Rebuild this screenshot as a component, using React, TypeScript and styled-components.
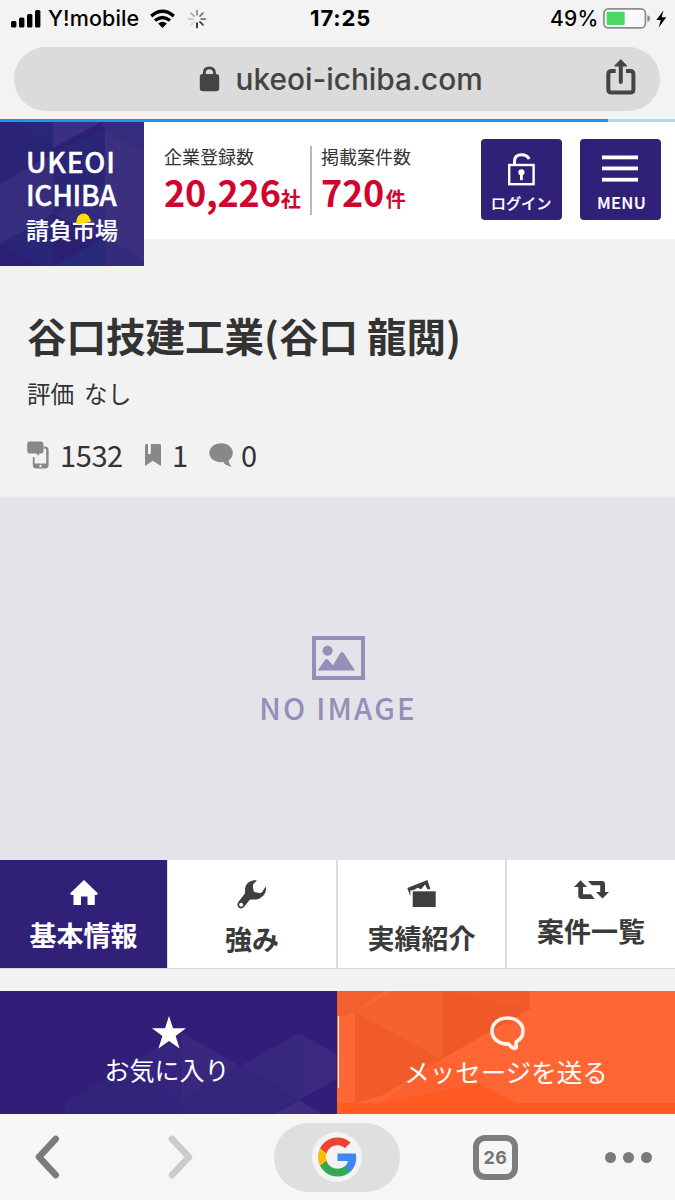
import React from "react";
import styled, { createGlobalStyle } from "styled-components";

const jp = '"Noto Sans CJK JP", "Noto Sans", sans-serif';
const ui = 'Inter, "Liberation Sans", sans-serif';
const navy = "#312078";

const GlobalStyle = createGlobalStyle`
  *, *::before, *::after { box-sizing: border-box; }
  html, body { margin: 0; padding: 0; background: #f2f2f2; }
  svg { display: block; flex: none; overflow: visible; }
`;

const Screen = styled.div`
  width: 675px;
  height: 1200px;
  overflow: hidden;
  display: flex;
  flex-direction: column;
  background: #f2f2f2;
  color: #333;
  font-family: ${jp};
  white-space: nowrap;
`;

/* Browser chrome */
const Chrome = styled.div`
  height: 119px;
  flex: none;
  background: #f3f3f4;
  font-family: ${ui};
`;

const StatusBar = styled.div`
  height: 37px;
  display: flex;
  align-items: center;
  color: #000;
  font-size: 21px;
  line-height: 37px;
`;

const Carrier = styled.div`
  width: 310px;
  padding-left: 11px;
  display: flex;
  align-items: center;
`;

const CarrierName = styled.span`
  width: 109px;
  padding-left: 7px;
  font-weight: 500;
  font-size: 21.5px;
  letter-spacing: 0.1px;
`;

const Spinner = styled.svg`
  margin-left: 13px;
`;

const Clock = styled.div`
  width: 240px;
  font-weight: 700;
  font-size: 22px;
  letter-spacing: 0.9px;
`;

const Battery = styled.div`
  display: flex;
  align-items: center;
  font-weight: 500;
  gap: 5px;
`;

const BatteryLevel = styled.span`
  width: 48px;
  letter-spacing: 0.2px;
`;

const AddressBar = styled.div`
  margin: 10px 15px 0 14px;
  height: 64px;
  border-radius: 32px;
  background: #dbdbdc;
  display: flex;
  align-items: center;
  padding-left: 185px;
  color: #444;
`;

const Url = styled.span`
  width: 370px;
  margin-left: 15.5px;
  font-size: 29.8px;
  font-weight: 500;
  line-height: 64px;
`;

const ShareIcon = styled.svg`
  margin-bottom: 3px;
`;

const Progress = styled.div`
  height: 3px;
  flex: none;
  background: #b4d6f0;
`;

const ProgressFill = styled.div`
  width: 608px;
  height: 3px;
  background: #2393f1;
`;

/* Site header */
const Header = styled.header`
  height: 117px;
  flex: none;
  background: #fff;
  display: flex;
  align-items: flex-start;
`;

const Logo = styled.div`
  position: relative;
  width: 144px;
  height: 144px;
  flex: none;
  background: #2c2074;
  color: #fff;
  padding: 23px 0 0 26px;
`;

const Pattern = styled.svg`
  position: absolute;
  left: 0;
  top: 0;
`;

const LogoWord = styled.div<{ $spacing: number }>`
  position: relative;
  height: 33px;
  line-height: 33px;
  font-size: 28px;
  font-weight: 500;
  -webkit-text-stroke: 0.4px #fff;
  letter-spacing: ${(p) => p.$spacing}px;
`;

const LogoKanji = styled.div`
  position: relative;
  height: 36px;
  line-height: 36px;
  font-size: 23px;
  font-weight: 500;
  -webkit-text-stroke: 0.2px #fff;
`;

const Helmet = styled.svg`
  position: absolute;
  left: 49.5px;
  top: 2px;
`;

const Counter = styled.div<{ $width: number; $divided?: boolean }>`
  width: ${(p) => p.$width}px;
  height: 69px;
  margin: 24px 0 0 ${(p) => (p.$divided ? 20 : 9)}px;
  border-right: ${(p) => (p.$divided ? "2px solid #b9b9b9" : "none")};
`;

const CounterLabel = styled.div`
  height: 20px;
  line-height: 20px;
  font-size: 18px;
`;

const CounterValue = styled.div`
  height: 50px;
  line-height: 51px;
  font-size: 36px;
  font-weight: 700;
  letter-spacing: -0.2px;
  color: #d0042c;
`;

const Unit = styled.span<{ $gap?: number }>`
  margin-left: ${(p) => p.$gap || 0}px;
  font-size: 20px;
`;

const HeaderButton = styled.button<{ $left: number }>`
  width: 81px;
  height: 81px;
  margin: 16.7px 0 0 ${(p) => p.$left}px;
  padding: 14px 0 0;
  border: 0;
  border-radius: 4px;
  background: ${navy};
  color: #fff;
  font-family: ${jp};
  font-weight: 500;
  display: flex;
  flex-direction: column;
  align-items: center;
`;

const ButtonIcon = styled.div`
  height: 34px;
`;

const ButtonText = styled.span<{ $size: number; $shift?: number }>`
  font-size: ${(p) => p.$size}px;
  line-height: 31px;
  letter-spacing: ${(p) => (p.$shift ? 0.3 : 0)}px;
  padding-left: ${(p) => p.$shift || 0}px;
  -webkit-text-stroke: 0.2px #fff;
`;

/* Company summary */
const Summary = styled.section`
  height: 258px;
  flex: none;
  padding: 71px 0 0 27px;
`;

const Title = styled.h1`
  margin: 0 0 2px;
  height: 50px;
  line-height: 50px;
  font-size: 39.5px;
  font-weight: 700;
`;

const Rating = styled.div`
  height: 62px;
  line-height: 62px;
  font-size: 23.6px;
  word-spacing: 4.6px;
`;

const Metrics = styled.div`
  display: flex;
  align-items: center;
  height: 62px;
  font-size: 29px;
  line-height: 62px;
`;

const Metric = styled.div<{ $width: number; $gap: number }>`
  display: flex;
  align-items: center;
  width: ${(p) => p.$width}px;
  gap: ${(p) => p.$gap}px;
`;

const MetricValue = styled.span`
  margin-top: -3px;
  letter-spacing: -0.4px;
`;

const NoImage = styled.section`
  height: 363px;
  flex: none;
  background: #e4e3ea;
  color: #958eb9;
  display: flex;
  flex-direction: column;
  align-items: center;
  padding: 139px 0 0 2px;
`;

const NoImageText = styled.div`
  margin: 9px 0 0 -1px;
  height: 36px;
  line-height: 36px;
  font-size: 29.4px;
  font-weight: 500;
  letter-spacing: 2.2px;
`;

/* Tabs */
const Tabs = styled.nav`
  height: 109px;
  flex: none;
  display: grid;
  grid-template-columns: 168px 170px 169px 168px;
  border-bottom: 1px solid #d6d6d6;
`;

const Tab = styled.div<{ $active?: boolean }>`
  display: flex;
  flex-direction: column;
  align-items: center;
  padding-top: 20px;
  background: ${(p) => (p.$active ? navy : "#fff")};
  color: ${(p) => (p.$active ? "#fff" : "#3a3a3a")};
  border-right: ${(p) => (p.$active ? "1px" : "2px")} solid #dcdcdf;
  &:last-child { border-right: 0; }
`;

const TabLabel = styled.span`
  margin-top: 10px;
  font-size: 27px;
  line-height: 40px;
  font-weight: 700;
`;

/* Fixed actions */
const Actions = styled.div`
  margin-top: 22px;
  height: 123px;
  flex: none;
  display: flex;
`;

const Action = styled.div<{ $accent?: boolean }>`
  position: relative;
  width: ${(p) => (p.$accent ? 338 : 337)}px;
  padding-top: 25px;
  padding-left: ${(p) => (p.$accent ? 3 : 0)}px;
  background: ${(p) => (p.$accent ? "#ff5a22" : "#321d78")};
  color: #fff;
  display: flex;
  flex-direction: column;
  align-items: center;
  overflow: hidden;
  &::before {
    content: "";
    display: ${(p) => (p.$accent ? "block" : "none")};
    position: absolute;
    left: 1px;
    top: 25px;
    width: 1px;
    height: 72px;
    background: #fff;
    z-index: 1;
  }
`;

const ActionIcon = styled.div`
  position: relative;
`;

const ActionLabel = styled.span<{ $size: number }>`
  position: relative;
  margin: 1.5px 3px 0 0;
  font-size: ${(p) => p.$size}px;
  line-height: 36px;
`;

/* Browser toolbar */
const Toolbar = styled.div`
  height: 86px;
  flex: none;
  display: flex;
  align-items: center;
  padding-left: 35px;
  background: #f6f6f7;
`;

const Forward = styled.div`
  margin-left: 109px;
`;

const GooglePill = styled.div`
  width: 126px;
  height: 69px;
  margin-left: 81px;
  border-radius: 35px;
  background: #dfdfdf;
  display: flex;
  align-items: center;
  justify-content: center;
`;

const GoogleDisc = styled.div`
  width: 50px;
  height: 50px;
  border-radius: 50%;
  background: #f3f3f4;
  display: flex;
  align-items: center;
  justify-content: center;
`;

const TabCount = styled.div`
  width: 45px;
  height: 45px;
  margin-left: 73px;
  border: 6px solid #7d7d7d;
  border-radius: 12px;
  color: #757575;
  font: 700 18px/33px ${ui};
  letter-spacing: 0.6px;
  text-align: center;
`;

const More = styled.div`
  display: flex;
  gap: 7px;
  margin-left: 87px;
`;

const Dot = styled.i`
  width: 11px;
  height: 11px;
  border-radius: 50%;
  background: #7a7a7a;
`;

const spokes = [0, 45, 90, 135, 180, 225, 270, 315];
const spokeAlpha = [0.5, 0.6, 0.72, 0.85, 1, 0.15, 0.22, 0.35];

export default function App() {
  return (
    <Screen>
      <GlobalStyle />
      <Chrome>
        <StatusBar>
          <Carrier>
            <svg width="30" height="18" viewBox="0 0 30 18">
              <rect x="0" y="11" width="5.4" height="6.5" rx="1.5" />
              <rect x="8" y="7.5" width="5.4" height="10" rx="1.5" />
              <rect x="16" y="4" width="5.4" height="13.5" rx="1.5" />
              <rect x="24" y="0" width="5.4" height="17.5" rx="1.5" />
            </svg>
            <CarrierName>Y!mobile</CarrierName>
            <svg width="25" height="18" viewBox="0 0 25 18">
              <g fill="none" stroke="#000" strokeWidth="3.4">
                <path d="M1.2 6.1Q12.5-3.4 23.8 6.1" />
                <path d="M5 10.5Q12.5 4.3 20 10.5" />
              </g>
              <path d="M8.1 13.4Q12.5 10 16.9 13.4L12.5 18Z" />
            </svg>
            <Spinner width="18" height="18" viewBox="-9 -9 18 18">
              {spokes.map((a, i) => (
                <line key={a} x1="0" y1="-4.2" x2="0" y2="-8.4" stroke="#222" strokeWidth="1.7" strokeLinecap="round" opacity={spokeAlpha[i]} transform={`rotate(${a})`} />
              ))}
            </Spinner>
          </Carrier>
          <Clock>17:25</Clock>
          <Battery>
            <BatteryLevel>49%</BatteryLevel>
            <svg width="48" height="21" viewBox="0 0 48 21">
              <rect x="0.9" y="0.9" width="41.5" height="19" rx="4.5" fill="#fafafa" stroke="#8d8d8f" strokeWidth="1.7" />
              <rect x="3.7" y="3.8" width="18" height="13.2" rx="1" fill="#4bd964" />
              <path d="M44.4 7Q47.2 8 47.2 10.4T44.4 13.8Z" fill="#8d8d8f" />
            </svg>
            <svg width="11" height="18" viewBox="0 0 11 18">
              <path d="M7.4 0.5L0.3 10H4.7L2.7 17.4L10.3 7.3H5.7Z" />
            </svg>
          </Battery>
        </StatusBar>
        <AddressBar>
          <svg width="21" height="26" viewBox="0 0 21 26">
            <path d="M5.3 11V7Q5.3 1.8 10.4 1.8T15.5 7V11" fill="none" stroke="#444" strokeWidth="2.8" />
            <rect x="0.8" y="8" width="19.4" height="17.3" rx="3" fill="#444" />
          </svg>
          <Url>ukeoi-ichiba.com</Url>
          <ShareIcon width="30" height="37" viewBox="0 0 30 37" fill="none" stroke="#444" strokeWidth="4">
            <path d="M9.7 12H5.5Q2.3 12 2.3 15.2V30.3Q2.3 33.6 5.5 33.6H24.2Q27.4 33.6 27.4 30.3V15.2Q27.4 12 24.2 12H20" />
            <path d="M14.8 23V4" strokeLinecap="round" />
            <path d="M14.8 0.6L21 7H8.6Z" fill="#444" strokeWidth="1" strokeLinejoin="round" />
          </ShareIcon>
        </AddressBar>
      </Chrome>
      <Progress>
        <ProgressFill />
      </Progress>

      <Header>
        <Logo>
          <Pattern width="144" height="144" viewBox="0 0 144 144">
            <path d="M0 0H53V32L0 62Z" fill="#2b2375" />
            <path d="M12 0H53V22Z" fill="#292877" />
            <path d="M53 0H101L53 26Z" fill="#3a2f80" />
            <path d="M101 0H144V30L105 8Z" fill="#362c7d" />
            <path d="M105 8L144 30V144H105Z" fill="#3b3080" />
            <path d="M53 30L105 6V62L53 92Z" fill="#2a2677" />
            <path d="M0 62L53 32V92L0 122Z" fill="#372d7e" />
            <path d="M53 92L105 62V118Z" fill="#332a7b" />
            <path d="M0 122L53 92V144H40Z" fill="#2a2677" />
            <path d="M53 144L105 116V144Z" fill="#282979" />
            <path d="M105 116L144 138V144H105Z" fill="#352b7d" />
          </Pattern>
          <LogoWord $spacing={0.8}>UKEOI</LogoWord>
          <LogoWord $spacing={-0.3}>ICHIBA</LogoWord>
          <LogoKanji>
            請負市場
            <Helmet width="16" height="12" viewBox="0 0 16 12">
              <path d="M0.4 11.5Q-0.4 4 4.5 1.3Q9-1 12.2 2.6Q13.6 4.2 14 6.3L15.6 7.4L14 9Z" fill="#ffdd00" />
            </Helmet>
          </LogoKanji>
        </Logo>
        <Counter $width={148} $divided>
          <CounterLabel>企業登録数</CounterLabel>
          <CounterValue>20,226<Unit>社</Unit></CounterValue>
        </Counter>
        <Counter $width={100}>
          <CounterLabel>掲載案件数</CounterLabel>
          <CounterValue>720<Unit $gap={1.5}>件</Unit></CounterValue>
        </Counter>
        <HeaderButton $left={59.6}>
          <ButtonIcon>
            <svg width="27" height="33" viewBox="0 0 27 33">
              <path d="M6.5 12V8.5Q6.5 1.8 13.5 1.8Q19 1.8 21.2 6" fill="none" stroke="#fff" strokeWidth="3" />
              <rect x="1.2" y="12" width="24.4" height="19.2" fill="none" stroke="#fff" strokeWidth="2.4" />
              <circle cx="13.4" cy="19.3" r="3.1" fill="#fff" />
              <path d="M12 20H14.8V27.2H12Z" fill="#fff" />
            </svg>
          </ButtonIcon>
          <ButtonText $size={15.2}>ログイン</ButtonText>
        </HeaderButton>
        <HeaderButton $left={18}>
          <ButtonIcon>
            <svg width="36" height="33" viewBox="0 0 36 33" fill="#fff">
              <rect x="0" y="2.5" width="36" height="3.8" />
              <rect x="0" y="13.5" width="36" height="3.8" />
              <rect x="0" y="24.8" width="36" height="3.8" />
            </svg>
          </ButtonIcon>
          <ButtonText $size={16.5} $shift={3}>MENU</ButtonText>
        </HeaderButton>
      </Header>

      <Summary>
        <Title>谷口技建工業(谷口 龍閲)</Title>
        <Rating>評価 なし</Rating>
        <Metrics>
          <Metric $width={117} $gap={11}>
            <svg width="22" height="28" viewBox="0 0 22 28">
              <path d="M16.8 5.5H18Q21.6 5.5 21.6 9V24Q21.6 27.5 18 27.5H9.4Q5.8 27.5 5.8 24V16H7.6V22.6H19.2V9Q19.2 7.7 18 7.7H16.8Z" fill="#888" />
              <circle cx="13.5" cy="25" r="1.2" fill="#f2f2f2" />
              <path d="M3 0.5H13.7Q16.5 0.5 16.5 3.3V9.7Q16.5 12.5 13.7 12.5H12.2L12 14.8L9 12.5H3Q0.2 12.5 0.2 9.7V3.3Q0.2 0.5 3 0.5Z" fill="#888" />
            </svg>
            <MetricValue>1532</MetricValue>
          </Metric>
          <Metric $width={65} $gap={11}>
            <svg width="17" height="22" viewBox="0 0 17 22">
              <path d="M2.5 0H4V10H6.8V0H15.5Q17 0 17 1.5V22L8.8 16.8L1 22V1.5Q1 0 2.5 0Z" fill="#888" />
            </svg>
            <MetricValue>1</MetricValue>
          </Metric>
          <Metric $width={60} $gap={8}>
            <svg width="24" height="24" viewBox="0 0 24 24">
              <path d="M12 0.3C18.7 0.3 23.8 4.5 23.8 9.8C23.8 13.4 21.7 16.3 19.6 17.6C19.8 20 20.8 22 22.7 23.8C18.5 23.2 15.8 21.5 14.2 19.1C6.2 20 0.3 15.5 0.3 9.8C0.3 4.5 5.5 0.3 12 0.3Z" fill="#888" />
            </svg>
            <MetricValue>0</MetricValue>
          </Metric>
        </Metrics>
      </Summary>

      <NoImage>
        <svg width="53" height="44" viewBox="0 0 53 44">
          <rect x="2" y="2" width="49" height="40" fill="none" stroke="#958eb9" strokeWidth="4" />
          <circle cx="15.6" cy="14.8" r="5" fill="#958eb9" />
          <path d="M5.7 34.6L13 24Q14.5 22 16.2 24L21 29.3L28 17.5Q30 14.5 32 17.5L43 34.6Z" fill="#958eb9" />
        </svg>
        <NoImageText>NO IMAGE</NoImageText>
      </NoImage>

      <Tabs>
        <Tab $active>
          <svg width="28" height="25" viewBox="0 0 28 25">
            <path d="M14 0L28 13.5L26.8 15H24.8V25H17.5V16.5H11V25H3.5V15H1.2L0 13.5Z" fill="#fff" />
          </svg>
          <TabLabel>基本情報</TabLabel>
        </Tab>
        <Tab>
          <svg width="30" height="29" viewBox="0 0 30 29">
            <path fillRule="evenodd" d="M19.9 0.2C15 -0.3 9.5 2 8.3 7.3C7.8 9.6 8.3 11.5 7.9 13.6L1.5 21.8C-0.2 24.2 0.3 26.3 1.7 27.5C3.4 29 5.7 28.5 7.2 26.8L12.5 20C15 18.8 18.8 20.7 23 18.3C28 15.8 30 10 28.7 6.6L25.3 11.8Q24.3 13.3 22.5 13L18.4 12.2Q16.4 11.7 16.3 9.7L15.9 6.2Q15.8 4.7 16.8 3.6ZM4.2 22.7A2 2 0 1 1 4.2 26.7A2 2 0 1 1 4.2 22.7Z" fill="#3f3f3f" />
          </svg>
          <TabLabel>強み</TabLabel>
        </Tab>
        <Tab>
          <svg width="29" height="28" viewBox="0 0 29 28" fill="#3f3f3f">
            <path d="M0.3 8L20.4 0L23.5 9.3H20.4L18 4.5L14.2 9.3L10.5 7.8L7 10L3.3 10.6V16.3Z" />
            <rect x="5.7" y="11.3" width="23" height="15.7" />
          </svg>
          <TabLabel>実績紹介</TabLabel>
        </Tab>
        <Tab>
          <svg width="35" height="21" viewBox="0 0 35 21" fill="#3f3f3f">
            <path d="M6.5 0.2L13 7H9V14.3H17L20.8 19H7.6Q4.3 19 4.3 15.8V7H0Z" />
            <path d="M14 1H27.8Q31 1 31 4.2V12H35L28.5 18.6L22 12H26.2V5.2H17.8Z" />
          </svg>
          <TabLabel>案件一覧</TabLabel>
        </Tab>
      </Tabs>

      <Actions>
        <Action>
          <Pattern width="337" height="123" viewBox="0 0 337 123">
            <path d="M65 111L123 77L182 111V123H65Z" fill="#32247b" />
            <path d="M123 77L182 42V111Z" fill="#35247e" />
            <path d="M182 42L240 75L182 108Z" fill="#3a2880" />
            <path d="M240 75V123H182V108Z" fill="#34267d" />
            <path d="M240 75L299 42V109Z" fill="#37277e" />
            <path d="M299 42L337 63V88L299 109Z" fill="#3b2980" />
            <path d="M240 75L299 109L275 123H240Z" fill="#33257c" />
            <path d="M299 109L322 123H275Z" fill="#402c81" />
          </Pattern>
          <ActionIcon>
            <svg width="34" height="33" viewBox="0 0 34 33">
              <path d="M17 0L21 12.2H34L23.6 20L27.6 32.5L17 24.9L6.4 32.5L10.4 20L0 12.2H13Z" fill="#fff" />
            </svg>
          </ActionIcon>
          <ActionLabel $size={25}>お気に入り</ActionLabel>
        </Action>
        <Action $accent>
          <Pattern width="338" height="123" viewBox="0 0 338 123">
            <path d="M0 0H338V112H180L140 92L40 112H0Z" fill="#ff6633" />
            <path d="M0 0H47L18 21L0 27Z" fill="#f3602f" />
            <path d="M18 21L105 68L44 105L18 112Z" fill="#f15b2a" />
            <path d="M18 21L55 0H105V68Z" fill="#f5622f" />
            <path d="M105 0L193 0V18L105 68Z" fill="#ef5828" />
            <path d="M105 0H193V18Z" fill="#f25b2a" />
            <path d="M105 68L145 92L44 112Z" fill="#fb622f" />
          </Pattern>
          <ActionIcon>
            <svg width="35" height="35" viewBox="0 0 35 35">
              <path d="M17.5 2C26 2 33 7.3 33 15C33 20 30.5 23.5 26.6 25.6C25.7 27.5 26 29 26.3 30.5C26.6 32 25.5 32.7 24 32.2C21.5 31.4 20 29.8 18.6 28.1C9 28 2 23 2 15C2 7.3 9 2 17.5 2Z" fill="none" stroke="#fff5ee" strokeWidth="3.6" />
            </svg>
          </ActionIcon>
          <ActionLabel $size={25.5}>メッセージを送る</ActionLabel>
        </Action>
      </Actions>

      <Toolbar>
        <svg width="24" height="44" viewBox="0 0 24 44">
          <path d="M20.7 4L4 22L20.7 40" fill="none" stroke="#7c7c7c" strokeWidth="6.6" strokeLinecap="round" strokeLinejoin="round" />
        </svg>
        <Forward>
          <svg width="25" height="44" viewBox="0 0 25 44">
            <path d="M4 4L21 22L4 40" fill="none" stroke="#cbcbcb" strokeWidth="6.6" strokeLinecap="round" strokeLinejoin="round" />
          </svg>
        </Forward>
        <GooglePill>
          <GoogleDisc>
            <svg width="39" height="40" viewBox="1 1 22 22">
              <path d="M22.56 12.25c0-.78-.07-1.53-.2-2.25H12v4.26h5.92c-.26 1.37-1.04 2.53-2.21 3.31v2.77h3.57c2.08-1.92 3.28-4.74 3.28-8.09z" fill="#4285f4" />
              <path d="M12 23c2.97 0 5.46-.98 7.28-2.66l-3.57-2.77c-.98.66-2.23 1.06-3.71 1.06-2.86 0-5.29-1.93-6.16-4.53H2.18v2.84C3.99 20.53 7.7 23 12 23z" fill="#34a853" />
              <path d="M5.84 14.09c-.22-.66-.35-1.36-.35-2.09s.13-1.43.35-2.09V7.07H2.18C1.43 8.55 1 10.22 1 12s.43 3.45 1.18 4.93l3.66-2.84z" fill="#fbbc05" />
              <path d="M12 5.38c1.62 0 3.06.56 4.21 1.64l3.15-3.15C17.45 2.09 14.97 1 12 1 7.7 1 3.99 3.47 2.18 7.07l3.66 2.84c.87-2.6 3.3-4.53 6.16-4.53z" fill="#ea4335" />
            </svg>
          </GoogleDisc>
        </GooglePill>
        <TabCount>26</TabCount>
        <More>
          <Dot />
          <Dot />
          <Dot />
        </More>
      </Toolbar>
    </Screen>
  );
}
